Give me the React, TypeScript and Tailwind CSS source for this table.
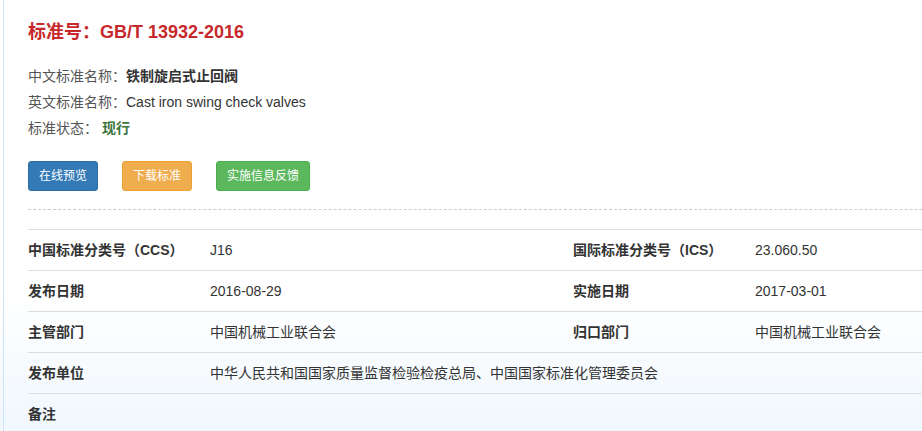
import React from "react";

const font = { fontFamily: '"Liberation Sans", Arial, "Noto Sans CJK SC", sans-serif' };

function Row({ a, b, c, d, full }: { a: string; b: string; c?: string; d?: string; full?: boolean }) {
  return (
    <div className="flex h-[41px] items-center border-t border-[#dddddd] text-[14px] text-[#333]">
      <div className="w-[182px] shrink-0 font-bold">{a}</div>
      {full ? (
        <div className="flex-1">{b}</div>
      ) : (
        <>
          <div className="w-[363px] shrink-0">{b}</div>
          <div className="w-[182px] shrink-0 font-bold">{c}</div>
          <div className="w-[363px] shrink-0">{d}</div>
        </>
      )}
    </div>
  );
}

export default function App() {
  return (
    <div
      className="w-[922px] h-[431px] overflow-hidden pl-[3px] bg-[linear-gradient(to_bottom,#ffffff_0px,#ffffff_290px,#f0f7fd_431px)]"
      style={font}
    >
      <div className="h-full border-l border-[#cfe4f6] pl-[24px] w-[1200px]">
        <div className="pt-[20px] text-[18px] leading-[24px] font-bold text-[#c7282c]">标准号：GB/T 13932-2016</div>
        <div className="mt-[19px] text-[14px] leading-[26px] text-[#555]">
          <div>
            中文标准名称：<span className="font-bold text-[#333]">铁制旋启式止回阀</span>
          </div>
          <div>
            英文标准名称：<span className="text-[#333]">Cast iron swing check valves</span>
          </div>
          <div>
            标准状态：<span className="ml-[4px] font-bold text-[#3c763d]">现行</span>
          </div>
        </div>
        <div className="mt-[20px] flex gap-[24px]">
          <div className="w-[70px] h-[30px] flex items-center justify-center rounded-[3px] border border-[#2e6da4] bg-[#337ab7] text-white text-[12px]">在线预览</div>
          <div className="w-[70px] h-[30px] flex items-center justify-center rounded-[3px] border border-[#eea236] bg-[#f0ad4e] text-white text-[12px]">下载标准</div>
          <div className="w-[94px] h-[30px] flex items-center justify-center rounded-[3px] border border-[#4cae4c] bg-[#5cb85c] text-white text-[12px]">实施信息反馈</div>
        </div>
        <div className="mt-[18px] border-t border-dashed border-[#cccccc]" />
        <div className="mt-[19px] w-[1090px]">
          <Row a="中国标准分类号（CCS）" b="J16" c="国际标准分类号（ICS）" d="23.060.50" />
          <Row a="发布日期" b="2016-08-29" c="实施日期" d="2017-03-01" />
          <Row a="主管部门" b="中国机械工业联合会" c="归口部门" d="中国机械工业联合会" />
          <Row a="发布单位" b="中华人民共和国国家质量监督检验检疫总局、中国国家标准化管理委员会" full />
          <Row a="备注" b="" full />
        </div>
      </div>
    </div>
  );
}
